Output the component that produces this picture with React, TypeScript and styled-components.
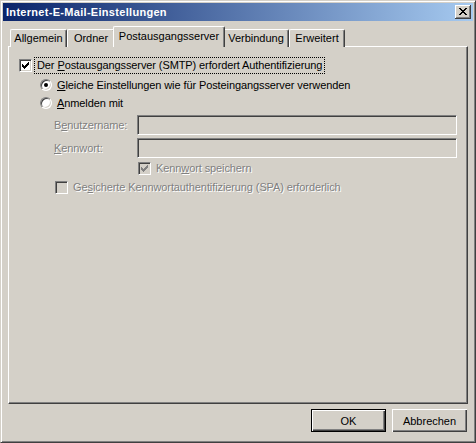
import React from 'react';
import styled, { createGlobalStyle, css } from 'styled-components';

const Global = createGlobalStyle`
  html, body { margin: 0; padding: 0; background: #d4d0c8; }
  body { font-family: "Liberation Sans", Arial, sans-serif; font-size: 11px; color: #000; }
  * { box-sizing: border-box; }
`;

const Window = styled.div`
  width: 476px;
  height: 443px;
  border: 1px solid;
  border-color: #d4d0c8 #404040 #404040 #d4d0c8;
  box-shadow: inset 1px 1px #fff, inset -1px -1px #808080;
  padding: 2px;
  display: flex;
  flex-direction: column;
  background: #d4d0c8;
`;

const TitleBar = styled.div`
  height: 18px;
  display: flex;
  align-items: center;
  justify-content: space-between;
  padding: 0 2px 0 3px;
  background: linear-gradient(to right, #0a246a, #a6caf0);
  color: #fff;
  font-weight: bold;
  font-size: 11px;
  letter-spacing: 0.3px;
`;

const CloseButton = styled.div`
  width: 16px;
  height: 14px;
  background: #d4d0c8;
  box-shadow: inset -1px -1px #404040, inset 1px 1px #fff, inset -2px -2px #808080;
  display: flex;
  align-items: center;
  justify-content: center;
  padding: 0 1px 1px 0;
`;

const Body = styled.div`
  flex: 1;
  display: flex;
  flex-direction: column;
  padding: 5px 5px 0;
`;

const TabRow = styled.div`
  display: flex;
  align-items: flex-end;
  height: 21px;
  padding-left: 2px;
  position: relative;
  z-index: 2;
`;

const Tab = styled.div<{ $w: number; $active?: boolean }>`
  width: ${p => p.$w}px;
  height: 18px;
  display: flex;
  align-items: center;
  justify-content: center;
  padding-bottom: 1px;
  background: #d4d0c8;
  border-left: 1px solid #fff;
  border-top: 1px solid #fff;
  border-right: 1px solid #404040;
  box-shadow: inset -1px 0 #808080;
  border-top-left-radius: 2px;
  border-top-right-radius: 2px;
  white-space: nowrap;
  ${p => p.$active && css`
    height: 21px;
    width: ${p.$w + 4}px;
    margin: 0 -2px;
    padding-bottom: 3px;
    position: relative;
    z-index: 3;
  `}
`;

const Panel = styled.div`
  flex: 1;
  margin-top: -1px;
  border: 1px solid;
  border-color: #fff #404040 #404040 #fff;
  box-shadow: inset -1px -1px #808080;
  display: flex;
  flex-direction: column;
  padding: 10px 0 0 10px;
  position: relative;
  z-index: 1;
`;

const Row = styled.div<{ $indent: number; $h: number; $mt: number }>`
  display: flex;
  align-items: center;
  height: ${p => p.$h}px;
  margin-top: ${p => p.$mt}px;
  padding-left: ${p => p.$indent}px;
  gap: 3px;
  white-space: nowrap;
`;

const Label = styled.span<{ $disabled?: boolean; $focus?: boolean }>`
  padding: 1px 2px 2px 2px;
  letter-spacing: -0.1px;
  ${p => p.$disabled && css`
    color: #808080;
    text-shadow: 1px 1px #fff;
  `}
  ${p => p.$focus && css`
    outline: 1px dotted #000;
    outline-offset: 0;
  `}
`;

const FieldLabel = styled(Label)`
  width: 80px;
  padding-left: 0;
`;

const Input = styled.div`
  width: 320px;
  height: 20px;
  background: #d4d0c8;
  border: 1px solid;
  border-color: #808080 #fff #fff #808080;
  box-shadow: inset 1px 1px #404040, inset -1px -1px #d4d0c8;
`;

const CheckBox = styled.div<{ $disabled?: boolean }>`
  width: 13px;
  height: 13px;
  flex: none;
  background: ${p => (p.$disabled ? '#d4d0c8' : '#fff')};
  border: 1px solid;
  border-color: #808080 #fff #fff #808080;
  box-shadow: inset 1px 1px #404040, inset -1px -1px #d4d0c8;
  display: flex;
  align-items: center;
  justify-content: center;
`;

const Radio = styled.div<{ $checked?: boolean }>`
  width: 12px;
  height: 12px;
  flex: none;
  border-radius: 50%;
  background: #fff;
  border: 1px solid;
  border-color: #808080 #fff #fff #808080;
  box-shadow: inset 1px 1px #404040, inset -1px -1px #d4d0c8;
  display: flex;
  align-items: center;
  justify-content: center;
  &::after {
    content: '';
    width: 4px;
    height: 4px;
    border-radius: 50%;
    background: ${p => (p.$checked ? '#000' : 'transparent')};
  }
`;

const Footer = styled.div`
  display: flex;
  justify-content: flex-end;
  gap: 6px;
  padding: 5px 1px 8px 0;
`;

const Button = styled.div<{ $default?: boolean }>`
  width: 75px;
  height: 23px;
  display: flex;
  align-items: center;
  justify-content: center;
  background: #d4d0c8;
  box-shadow: inset 1px 1px #fff, inset -1px -1px #404040, inset -2px -2px #808080;
  ${p => p.$default && css`
    border: 1px solid #000;
  `}
`;

const Check = ({ color }: { color: string }) => (
  <svg width="7" height="7" viewBox="0 0 7 7" shapeRendering="crispEdges">
    <path
      fill={color}
      d="M0 2h1v3h-1z M1 3h1v3h-1z M2 4h1v3h-1z M3 3h1v3h-1z M4 2h1v3h-1z M5 1h1v3h-1z M6 0h1v3h-1z"
    />
  </svg>
);

const CloseX = () => (
  <svg width="8" height="7" viewBox="0 0 8 7" shapeRendering="crispEdges">
    <path
      fill="#000"
      d="M0 0h2v1h-2z M1 1h2v1h-2z M2 2h1v1h-1z M3 2h2v3h-2z M5 2h1v1h-1z M2 4h1v1h-1z M5 4h1v1h-1z M1 5h2v1h-2z M0 6h2v1h-2z M6 0h2v1h-2z M5 1h2v1h-2z M5 5h2v1h-2z M6 6h2v1h-2z"
    />
  </svg>
);

export default function App() {
  return (
    <>
      <Global />
      <Window>
        <TitleBar>
          <span>Internet-E-Mail-Einstellungen</span>
          <CloseButton>
            <CloseX />
          </CloseButton>
        </TitleBar>
        <Body>
          <TabRow>
            <Tab $w={57}>Allgemein</Tab>
            <Tab $w={48}>Ordner</Tab>
            <Tab $w={108} $active>Postausgangsserver</Tab>
            <Tab $w={66}>Verbindung</Tab>
            <Tab $w={56}>Erweitert</Tab>
          </TabRow>
          <Panel>
            <Row $indent={0} $h={17} $mt={0}>
              <CheckBox>
                <Check color="#000" />
              </CheckBox>
              <Label $focus>
                Der <u>P</u>ostausgangsserver (SMTP) erfordert Authentifizierung
              </Label>
            </Row>
            <Row $indent={21} $h={18} $mt={2}>
              <Radio $checked />
              <Label>
                <u>G</u>leiche Einstellungen wie für Posteingangsserver verwenden
              </Label>
            </Row>
            <Row $indent={21} $h={18} $mt={0}>
              <Radio />
              <Label>
                <u>A</u>nmelden mit
              </Label>
            </Row>
            <Row $indent={35} $h={20} $mt={3}>
              <FieldLabel $disabled>
                B<u>e</u>nutzername:
              </FieldLabel>
              <Input />
            </Row>
            <Row $indent={35} $h={20} $mt={3}>
              <FieldLabel $disabled>
                <u>K</u>ennwort:
              </FieldLabel>
              <Input />
            </Row>
            <Row $indent={119} $h={17} $mt={2}>
              <CheckBox $disabled>
                <Check color="#808080" />
              </CheckBox>
              <Label $disabled>
                Kenn<u>w</u>ort speichern
              </Label>
            </Row>
            <Row $indent={36} $h={17} $mt={2}>
              <CheckBox $disabled />
              <Label $disabled>
                Ge<u>s</u>icherte Kennwortauthentifizierung (SPA) erforderlich
              </Label>
            </Row>
          </Panel>
          <Footer>
            <Button $default>OK</Button>
            <Button>Abbrechen</Button>
          </Footer>
        </Body>
      </Window>
    </>
  );
}
